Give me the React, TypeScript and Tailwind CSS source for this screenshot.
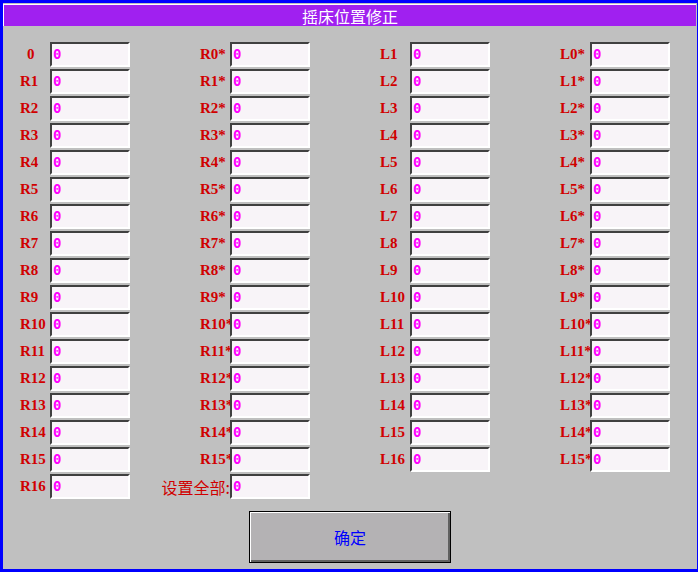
import type { ReactElement } from "react";

type Cell = { label: string; value: string; offset?: boolean; wide?: boolean } | null;

const rNames = Array.from({ length: 16 }, (_, i) => `R${i + 1}`);

const columns: Cell[][] = [
  [{ label: "0", value: "0", offset: true }, ...rNames.map((n) => ({ label: n, value: "0" }))],
  [
    ...Array.from({ length: 16 }, (_, i) => ({ label: `R${i}*`, value: "0" })),
    { label: "设置全部:", value: "0", wide: true },
  ],
  [...Array.from({ length: 16 }, (_, i) => ({ label: `L${i + 1}`, value: "0" })), null],
  [...Array.from({ length: 16 }, (_, i) => ({ label: `L${i}*`, value: "0" })), null],
];

function Field({ cell }: { cell: Cell }): ReactElement {
  if (!cell) return <div className="h-[25px]" />;
  return (
    <div className="flex h-[25px] items-center">
      <div
        className={`flex w-[30px] shrink-0 whitespace-nowrap text-[#d00000] ${
          cell.wide
            ? "justify-end font-['Noto_Sans_CJK_SC',sans-serif] text-[16px] font-normal"
            : "font-['Liberation_Serif',serif] text-[15px] font-bold"
        } ${cell.offset ? "pl-[7px]" : ""}`}
      >
        {cell.label}
      </div>
      <div className="relative flex h-[25px] w-[80px] items-center border-t-2 border-l-2 border-r-2 border-b-2 border-t-[#404040] border-l-[#404040] border-r-white border-b-white bg-[#f8f4f8] pl-[1px] font-['DejaVu_Sans_Mono',monospace] text-[14px] font-bold text-[#ff00ff]">
        {cell.value}
      </div>
    </div>
  );
}

export default function App(): ReactElement {
  return (
    <div className="flex h-[572px] w-[698px] flex-col border-t-[3px] border-l-[3px] border-b-[3px] border-r border-[#0000ff] bg-[#c0c0c0]">
      <div className="mt-[1px] mr-[1px] flex h-[22px] items-center justify-center border-t border-l border-white bg-[#a020f0] font-['Noto_Sans_CJK_SC',sans-serif] text-[16px] leading-none text-white">
        摇床位置修正
      </div>
      <div className="mt-[16px] flex gap-[70px] pl-[17px]">
        {columns.map((col, ci) => (
          <div key={ci} className="flex flex-col gap-[2px]">
            {col.map((cell, ri) => (
              <Field key={ri} cell={cell} />
            ))}
          </div>
        ))}
      </div>
      <div className="mt-[12px] flex pl-[246px]">
        <button
          type="button"
          className="flex h-[52px] w-[202px] items-center justify-center border border-black bg-[#b4b2b4] font-['Noto_Sans_CJK_SC',sans-serif] text-[16px] text-[#0000ff] shadow-[inset_1px_1px_0_#ffffff,inset_-2px_-2px_0_#606060]"
        >
          确定
        </button>
      </div>
    </div>
  );
}
